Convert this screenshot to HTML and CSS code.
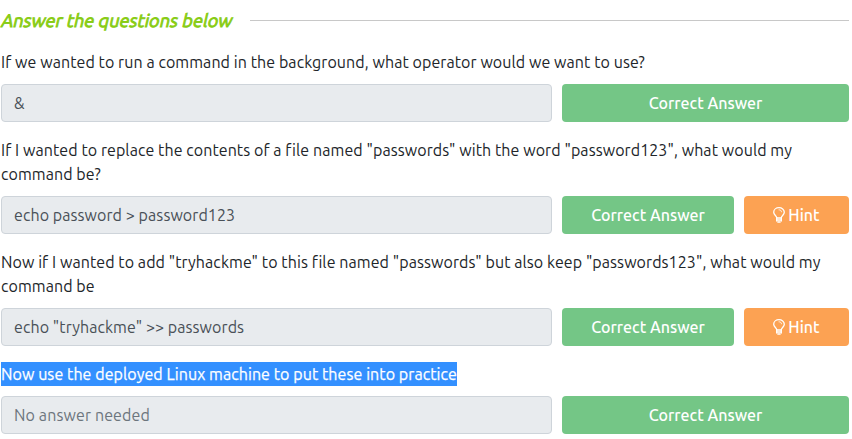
FILE: index.html
```html
<!DOCTYPE html>
<html lang="en">
<head>
<meta charset="utf-8">
<title>Questions</title>
<link rel="stylesheet" href="styles.css">
</head>
<body>
<svg class="sprite" aria-hidden="true">
  <symbol id="bulb" viewBox="0 0 12 16">
    <g fill="none" stroke="currentColor" stroke-width="1.3" stroke-linecap="round" stroke-linejoin="round">
      <path d="M3.700 10.800C3.600 8.800.7 8 .7 5.200.7 2.500 3.200.7 6 .7s5.300 1.800 5.300 4.500c0 2.800-2.900 3.600-3 5.600"/>
      <path d="M3.700 11h4.600M3.700 13h4.600M4.800 15h2.400"/>
      <path d="M6 2.800c1.400 0 2.500.7 2.500 2" stroke-width=".8"/>
      <path d="M3.700 11v3M8.300 11v3"/>
    </g>
  </symbol>
</svg>
<main class="tasks">
  <header class="heading"><h2 class="heading-title"><span class="slant">Answer the questions below</span></h2><span class="heading-rule"></span></header>
  <section class="question">
    <p class="prompt">If we wanted to run a command in the background, what operator would we want to use?</p>
    <div class="row"><div class="field">&amp;</div><div class="btn correct">Correct Answer</div></div>
  </section>
  <section class="question">
    <p class="prompt">If I wanted to replace the contents of a file named "passwords" with the word "password123", what would my command be?</p>
    <div class="row"><div class="field">echo password &gt; password123</div><div class="btn correct">Correct Answer</div><div class="btn hint"><svg class="icon"><use href="#bulb"/></svg><span>Hint</span></div></div>
  </section>
  <section class="question">
    <p class="prompt">Now if I wanted to add "tryhackme" to this file named "passwords" but also keep "passwords123", what would my command be</p>
    <div class="row"><div class="field">echo "tryhackme" &gt;&gt; passwords</div><div class="btn correct">Correct Answer</div><div class="btn hint"><svg class="icon"><use href="#bulb"/></svg><span>Hint</span></div></div>
  </section>
  <section class="question">
    <p class="prompt selected">Now use the deployed Linux machine to put these into practice</p>
    <div class="row"><div class="field placeholder">No answer needed</div><div class="btn correct">Correct Answer</div></div>
  </section>
</main>
</body>
</html>
```
FILE: styles.css
```css
* { box-sizing: border-box; }
body { margin: 0; background: #fff; color: #212529; font-family: Ubuntu, "Noto Sans", sans-serif; font-size: 16px; line-height: 24px; letter-spacing: 0.075px; }
.sprite { display: none; }
.tasks { width: 848px; margin-left: 1px; padding-top: 8px; }
.heading { display: flex; align-items: center; height: 26px; margin-bottom: 16px; }
.heading-title { width: 249px; margin: 0 0 2px; color: #88cc14; font-size: 18px; font-weight: 400; letter-spacing: 0.1px; white-space: nowrap; }
.slant { display: inline-block; margin-left: 1px; transform: skewX(-13deg); -webkit-text-stroke: 0.9px #88cc14; }
.heading-rule { flex: 1; height: 1px; background: #c8c8c8; margin-bottom: 1px; }
.question { margin-bottom: 16px; }
.prompt { margin: 0 0 10px; }
.row { display: flex; gap: 10px; }
.field { width: 551px; height: 38px; padding: 6px 12px; border: 1px solid #ced4da; border-radius: 4px; background: #e8ebee; color: #495057; white-space: nowrap; }
.placeholder { color: #6c757d; letter-spacing: 0.12px; }
.btn { display: flex; align-items: center; justify-content: center; height: 38px; border-radius: 4px; color: #fff; font-weight: 500; letter-spacing: 0; }
.correct { flex: 1; background: #74c686; }
.hint { width: 105px; gap: 3px; background: #fca253; }
.icon { width: 12px; height: 16px; }
.selected { width: 456px; white-space: nowrap; background: #3390ff; color: #fff; -webkit-text-stroke: 0.25px #fff; }
```
